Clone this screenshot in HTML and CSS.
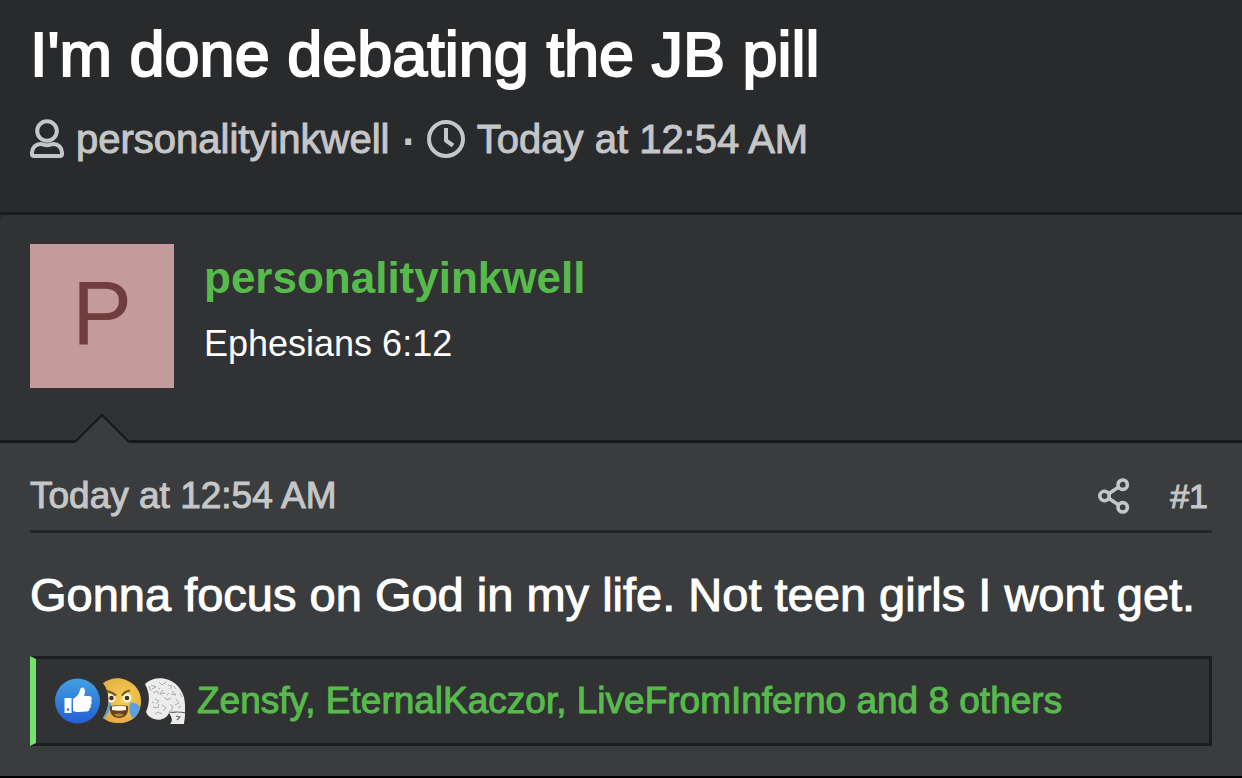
FILE: index.html
```
<!DOCTYPE html>
<html lang="en">
<head>
<meta charset="utf-8">
<title>I'm done debating the JB pill</title>
<meta name="viewport" content="width=device-width, initial-scale=1.0">
<link rel="stylesheet" href="styles.css">
</head>
<body>
	<header class="thread-header">
		<h1 class="thread-title">I'm done debating the JB pill</h1>
		<ul class="thread-meta">
			<li>
				<svg class="icon-user" viewBox="0 0 34 40" aria-hidden="true">
					<circle cx="17" cy="12" r="9.800"/>
					<path d="M2 35V33.500a8.500 8.500 0 0 1 8.500-8.500c2.500 0 3.800 1.300 6.500 1.300s4-1.300 6.500-1.300a8.500 8.500 0 0 1 8.500 8.500V35a2 2 0 0 1-2 2H4a2 2 0 0 1-2-2z"/>
				</svg>
				<a href="#user">personalityinkwell</a>
			</li>
			<li class="dot" aria-hidden="true">·</li>
			<li>
				<svg class="icon-clock" viewBox="0 0 38 38" aria-hidden="true">
					<circle cx="19" cy="19" r="17"/>
					<path d="M19 8v12.500l7 5"/>
				</svg>
				<a href="#post-1"><time>Today at 12:54 AM</time></a>
			</li>
		</ul>
	</header>

	<article class="post" id="post-1">
		<section class="post-user" id="user">
			<a class="avatar" href="#user">P</a>
			<div class="user-info">
				<h2 class="user-name"><a href="#user">personalityinkwell</a></h2>
				<p class="user-title">Ephesians 6:12</p>
			</div>
			<svg class="arrow" viewBox="0 0 56 30" aria-hidden="true">
				<path class="arrow-fill" d="M0 30v-1.500L28 1.500l28 27V30z"/>
				<path class="arrow-line" d="M0 28.500h1.500L28 2l26.500 26.500H56"/>
			</svg>
		</section>

		<section class="post-main">
			<div class="post-bar">
				<a class="post-date" href="#post-1"><time>Today at 12:54 AM</time></a>
				<a class="share" href="#post-1" aria-label="Share">
					<svg viewBox="0 0 32 36" aria-hidden="true">
						<path d="M11 15.500l9-6M11 20.500l9 6"/>
						<circle cx="6.500" cy="18" r="4.700"/>
						<circle cx="24.700" cy="6.700" r="4.700"/>
						<circle cx="24.700" cy="29.300" r="4.700"/>
					</svg>
				</a>
				<a class="post-number" href="#post-1">#1</a>
			</div>

			<p class="post-text">Gonna focus on God in my life. Not teen girls I wont get.</p>

			<div class="reactions">
				<svg class="reaction-icons" viewBox="0 0 132 48" aria-hidden="true">
					<defs>
						<linearGradient id="blue" x1="0" y1="0" x2="0" y2="1">
							<stop offset="0" stop-color="#429fe2"/>
							<stop offset="1" stop-color="#245fd4"/>
						</linearGradient>
						<radialGradient id="yellow" cx=".55" cy=".45" r=".6">
							<stop offset="0" stop-color="#f3cf58"/>
							<stop offset="1" stop-color="#e5a93f"/>
						</radialGradient>
						<clipPath id="face"><path d="M48 6C55 1 64 0 71 3c10 4 15 12 15 21 0 14-9 22-22 22-8 0-12-2-16-5 7-11 8-24 0-35z"/></clipPath>
						<clipPath id="head"><path d="M90 7c6-6 16-7 24-4 10 4 16 14 16 25v10c0 4-1 6-1 9h-14c3-3 2-7-1-11-3 7-12 9-19 4-2-1-3-3-4-5 4-10 4-19-1-28z"/></clipPath>
					</defs>
					<!-- like -->
					<circle cx="22.500" cy="24" r="22.500" fill="url(#blue)"/>
					<path fill="#fff" fill-rule="evenodd" d="M9.500 21h7v15h-7zM11.800 32.500a1.300 1.300 0 1 0 2.600 0a1.300 1.300 0 1 0-2.600 0"/>
					<path fill="#fff" d="M18 34V22c4-2 6-5 7-9 1-4 5-3 5 1 0 2-.5 3-1 5h5c3 0 3.500 3 2 4.500 1 1.500 1 3-.5 4.500 1 1.500.3 2.500-1 3.500 0 2-1 3-3 3l-8 .5c-3 0-4-.5-5.500-1z"/>
					<!-- angry laugh -->
					<g clip-path="url(#face)">
						<path fill="url(#yellow)" d="M45 0h44v48H45z"/>
						<path fill="#5aa0df" d="M47 27c4-1 7-2 9-1 0 6-3 12-8 17l-4-3zM75 26c5-2 12 4 12 10 0 5-4 7-8 6-4-3-6-9-4-16z"/>
						<circle cx="56" cy="21" r="4.500" fill="#fff5d8"/>
						<circle cx="72" cy="21" r="4.500" fill="#fff5d8"/>
						<circle cx="56.500" cy="21" r="2.300" fill="#49321d"/>
						<circle cx="72" cy="21" r="2.300" fill="#49321d"/>
						<path fill="none" stroke="#70511f" stroke-width="2.200" d="M52 14c4 1 6 2 9 4.500M67 18.500c2-3 5-4.500 8-5"/>
						<path fill="#65431e" d="M55 29c6-1 12-1 18 0 1 8-3 12-9 12s-10-4-9-12z"/>
						<path fill="#fffbe9" d="M57 29.500c5-1 10-1 14 0v3.500c-5 1-9 1-14 0z"/>
						<path fill="#b9832f" d="M59 37.500c3-1.500 7-1.500 10 0-3 3-7 3-10 0z"/>
					</g>
					<!-- sketched head -->
					<g clip-path="url(#head)">
						<path fill="#ececec" d="M88 0h44v48H88z"/>
						<path class="sketch" d="M96 8l5 2-4 2M104 5l3 3 4-3M113 8l4 1-2 3M98 16l4-2 2 3M108 13l-3 4 5-1M117 14l4 4-5-1M100 22l4 2-3 3M109 20l3 3 4-2M121 22l3 4-4 2M98 30l5 1 1-4M107 28l4 3-3 3M115 27l3 3-2 4M100 37l3-2 4 2M123 31l3-2M112 18l2-2M103 11l2 1M119 9l2 3M125 16l2 4M97 25l2 1M94 9l2 5"/>
						<path class="neck" d="M114 35c4 1 6 0 8 0s5 0 8 1M121 39l4 1-3 3"/>
					</g>
				</svg>
				<a href="#reactions">Zensfy, EternalKaczor, LiveFromInferno and 8 others</a>
			</div>
		</section>
	</article>
</body>
</html>
```
FILE: styles.css
```
*{
	box-sizing:border-box;
}

body{
	margin:0;
	background:#000;
	color:#fff;
	font-family:"Liberation Sans", Arial, sans-serif;
	-webkit-text-stroke:1px;
}

a{
	color:inherit;
	text-decoration:none;
}

h1, h2, p, ul{
	margin:0;
	padding:0;
	font-weight:normal;
}

svg{
	display:block;
	flex:none;
	fill:none;
}

.thread-header{
	padding:16px 30px 48px;
	background:#292a2c;
	border-bottom:3px solid #1a1b1c;
}

.thread-title{
	font-size:63px;
	line-height:76px;
	-webkit-text-stroke:2px;
}

.thread-meta{
	display:flex;
	align-items:center;
	margin-top:22px;
	gap:12px;
	list-style:none;
	color:#c5c6c8;
	font-size:40px;
	line-height:50px;
}

.thread-meta li{
	display:flex;
	align-items:center;
	gap:12px;
}

.thread-meta .dot{
	-webkit-text-stroke:2px;
}

.icon-user,
.icon-clock{
	stroke:#c5c6c8;
	stroke-width:4;
	stroke-linejoin:round;
}

.icon-user{
	width:34px;
	height:40px;
}

.icon-clock{
	width:38px;
	height:38px;
}

.post{
	background:#292a2c;
	border-bottom:2px solid #000;
}

.post-user{
	position:relative;
	display:flex;
	gap:30px;
	padding:29px 30px 52px;
	background:#313234;
	border-bottom:3px solid #17181a;
	border-top-left-radius:6px;
}

.avatar{
	width:144px;
	height:144px;
	flex:none;
	background:#c49b9a;
	color:#703d3e;
	font-size:90px;
	line-height:138px;
	text-align:center;
	-webkit-text-stroke:0;
}

.user-info{
	padding-top:8px;
}

.user-name{
	color:#57bb4b;
	font-size:44px;
	font-weight:bold;
	line-height:52px;
	-webkit-text-stroke:0;
}

.user-title{
	margin-top:16px;
	font-size:36px;
	line-height:48px;
	-webkit-text-stroke:0;
}

/* notch that ties the post to its author */
.arrow{
	position:absolute;
	left:74px;
	bottom:-3px;
	width:56px;
	height:30px;
}

.arrow-fill{
	fill:#3b3c3e;
}

.arrow-line{
	stroke:#17181a;
	stroke-width:2;
}

.post-main{
	padding:24px 30px 30px;
	background:#3b3c3e;
}

.post-bar{
	display:flex;
	align-items:center;
	padding:5px 4px 10px 0;
	border-bottom:3px solid #242527;
	color:#c5c6c8;
	font-size:37px;
	line-height:48px;
}

.share{
	margin-left:auto;
	margin-right:40px;
}

.share svg{
	width:32px;
	height:36px;
	stroke:#c5c6c8;
	stroke-width:3.6;
}

.post-number{
	font-size:34px;
}

.post-text{
	margin-top:34px;
	font-size:47px;
	line-height:56px;
}

.reactions{
	display:flex;
	align-items:center;
	gap:10px;
	margin-top:33px;
	padding:18px 19px;
	background:#313234;
	border:3px solid #1c1d1f;
	border-left:6px solid #75e36b;
	color:#57bb4b;
	font-size:37px;
	line-height:48px;
}

.reaction-icons{
	width:132px;
	height:48px;
}

.sketch{
	stroke:#aaa;
	stroke-width:1;
}

.neck{
	stroke:#666;
	stroke-width:1.2;
}
```
